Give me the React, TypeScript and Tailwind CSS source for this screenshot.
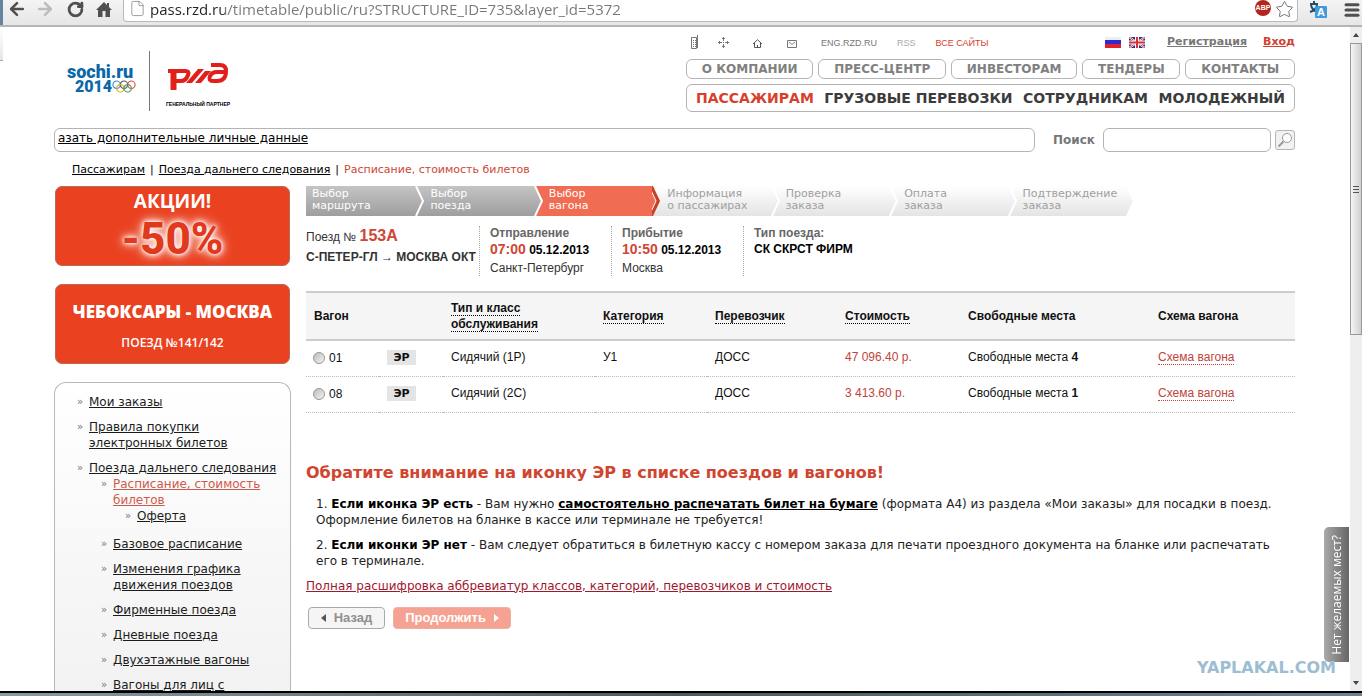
import React from 'react';
import { ArrowLeft, ArrowRight, File, Menu, RotateCw, Star } from 'lucide-react';

interface MenuItem {
  label: string;
  active?: boolean;
  children?: MenuItem[];
}

interface Wagon {
  number: string;
  type: string;
  category: string;
  carrier: string;
  price: string;
  seats: number;
}

const topNav = ['О КОМПАНИИ', 'ПРЕСС-ЦЕНТР', 'ИНВЕСТОРАМ', 'ТЕНДЕРЫ', 'КОНТАКТЫ'];
const mainNav = ['ПАССАЖИРАМ', 'ГРУЗОВЫЕ ПЕРЕВОЗКИ', 'СОТРУДНИКАМ', 'МОЛОДЕЖНЫЙ'];

const steps = [
  ['Выбор', 'маршрута'],
  ['Выбор', 'поезда'],
  ['Выбор', 'вагона'],
  ['Информация', 'о пассажирах'],
  ['Проверка', 'заказа'],
  ['Оплата', 'заказа'],
  ['Подтверждение', 'заказа'],
];
const currentStep = 2;

const menu: MenuItem[] = [
  { label: 'Мои заказы' },
  { label: 'Правила покупки электронных билетов' },
  {
    label: 'Поезда дальнего следования',
    children: [
      { label: 'Расписание, стоимость билетов', active: true, children: [{ label: 'Оферта' }] },
      { label: 'Базовое расписание' },
      { label: 'Изменения графика движения поездов' },
      { label: 'Фирменные поезда' },
      { label: 'Дневные поезда' },
      { label: 'Двухэтажные вагоны' },
      { label: 'Вагоны для лиц с' },
    ],
  },
];

const wagons: Wagon[] = [
  { number: '01', type: 'Сидячий (1Р)', category: 'У1', carrier: 'ДОСС', price: '47 096.40 р.', seats: 4 },
  { number: '08', type: 'Сидячий (2С)', category: '', carrier: 'ДОСС', price: '3 413.60 р.', seats: 1 },
];

function BrowserBar() {
  return (
    <div className="flex h-[27px] shrink-0 items-start border-b-2 border-[#b5b5b5] bg-linear-to-b from-[#f4f4f4] to-[#e6e6e6] text-[#505050]">
      <div className="h-full w-[3px] bg-[#6484a0]" />
      <div className="flex h-[18px] w-[120px] items-center">
        <button aria-label="Назад" className="ml-1"><ArrowLeft size={20} strokeWidth={3} /></button>
        <button aria-label="Вперёд" className="ml-2 text-[#bcbcbc]"><ArrowRight size={20} strokeWidth={3} /></button>
        <button aria-label="Обновить" className="ml-3"><RotateCw size={17} strokeWidth={4} /></button>
        <button aria-label="Домой" className="ml-3">
          <svg width="16" height="17" viewBox="0 0 16 17" fill="currentColor">
            <path d="M8 1 L0 9 H2 V16 H6.500 V10 H9.500 V16 H14 V9 H16 L13 6 V2 H11 V4 Z" />
          </svg>
        </button>
      </div>
      <div className="flex h-[22px] flex-1 items-start rounded-b border border-t-0 border-[#b9b9b9] bg-white pr-[3px] pl-[5px]">
        <File size={17} strokeWidth={1} className="mr-1 text-[#777]" />
        <input
          aria-label="Адрес страницы"
          className="h-[18px] flex-1 bg-[linear-gradient(90deg,#222_75px,#777_75px)] bg-clip-text font-['Open_Sans','Noto_Sans',sans-serif] text-[15px] leading-[18px] text-transparent outline-none"
          defaultValue="pass.rzd.ru/timetable/public/ru?STRUCTURE_ID=735&layer_id=5372"
        />
        <span className="mr-1 flex size-4 items-center justify-center rounded-full bg-[#b3261e] font-['Liberation_Sans',sans-serif] text-[7px] font-bold text-white">ABP</span>
        <button aria-label="В закладки"><Star size={19} strokeWidth={1} /></button>
      </div>
      <div className="flex h-[19px] w-[64px] items-center gap-4 pl-[11px]">
        <svg width="18" height="18" viewBox="0 0 18 18">
          <path d="M1 3 H9 M5 0 V3 M2 4 Q3 9 8 11 M8 4 Q7 9 1 11" stroke="#234d6b" strokeWidth="2" fill="none" />
          <rect x="6" y="5" width="12" height="12" rx="1" fill="#3f9bdb" />
          <text x="8" y="15" fontSize="11" fontWeight="bold" fontFamily="Liberation Sans" fill="#fff">A</text>
        </svg>
        <button aria-label="Меню"><Menu size={18} strokeWidth={4} /></button>
      </div>
    </div>
  );
}

function Logos() {
  return (
    <div className="flex pt-[24px] pl-[13px]">
      <div className="mt-[13px] h-[36px] w-[82px] font-['Roboto','DejaVu_Sans',sans-serif] font-black text-[#0a68a8]">
        <div className="text-[18px] leading-[15px]">sochi.ru</div>
        <div className="flex h-[15px] items-center pl-2">
          <span className="text-[16px] leading-[15px]">2014</span>
          <svg width="24" height="13" viewBox="0 0 26 14" fill="none" strokeWidth="1.200">
            <circle cx="5" cy="5" r="4" stroke="#4a8cc0" />
            <circle cx="13" cy="5" r="4" stroke="#555" />
            <circle cx="21" cy="5" r="4" stroke="#d9534a" />
            <circle cx="9" cy="9" r="4" stroke="#d9b33c" />
            <circle cx="17" cy="9" r="4" stroke="#4c9a5e" />
          </svg>
        </div>
      </div>
      <div className="h-[60px] w-px bg-[#777]" />
      <div className="flex flex-col items-center pt-[12px] pl-4">
        <svg width="61" height="28" viewBox="0 0 61 28" fill="none" stroke="#e21f1a" strokeWidth="4" role="img" aria-label="РЖД">
          <path d="M0 8 H10" />
          <path d="M5.500 6 V27" strokeWidth="6" />
          <path d="M8 8 H17 Q22 8 20 12 Q18 18 13 18 H8" />
          <path d="M18 20 H24 L36 6 H30 Z" fill="#e21f1a" stroke="none" />
          <path d="M27 20 H33 L43 8 H37 Z" fill="#e21f1a" stroke="none" />
          <path d="M43 2 H52 Q58 2 58 8 Q58 18 49 18 H45 Q40 18 42 13 Q44 9 49 9 H56" />
        </svg>
        <span className="mt-[9px] font-['Liberation_Sans',sans-serif] text-[5px] leading-[8px] font-bold text-black">ГЕНЕРАЛЬНЫЙ ПАРТНЕР</span>
      </div>
    </div>
  );
}

function RussianFlag() {
  return (
    <svg width="16" height="11" viewBox="0 0 16 11">
      <rect width="16" height="4" fill="#eee" />
      <rect y="3" width="16" height="4" fill="#2a2ad0" />
      <rect y="7" width="16" height="4" fill="#e0202c" />
    </svg>
  );
}

function BritishFlag() {
  return (
    <svg width="16" height="11" viewBox="0 0 16 11">
      <rect width="16" height="11" fill="#2c2f7c" />
      <path d="M0 0 L16 11 M16 0 L0 11" stroke="#fff" strokeWidth="2" />
      <path d="M0 0 L16 11 M16 0 L0 11" stroke="#d8404a" strokeWidth="1" />
      <path d="M8 0 V11 M0 5.500 H16" stroke="#fff" strokeWidth="4" />
      <path d="M8 0 V11 M0 5.500 H16" stroke="#d8303a" strokeWidth="2" />
    </svg>
  );
}

function ServiceLinks() {
  return (
    <div className="flex h-[18px] items-center font-['Liberation_Sans',sans-serif] text-[9px] text-[#777]">
      <a href="#mobile" aria-label="Мобильная версия" className="ml-[5px]">
        <svg width="9" height="14" viewBox="0 0 9 14" fill="none" stroke="currentColor">
          <path d="M0.500 2.500 H5.500 V13.500 H0.500 Z M6.500 0 V13" />
          <path d="M2 5.500 H5 M2 7.500 H5 M2 9.500 H5 M2 11.500 H5" strokeDasharray="1 1" />
        </svg>
      </a>
      <a href="#map" aria-label="Карта сайта" className="ml-[18px]">
        <svg width="11" height="11" viewBox="0 0 11 11" fill="none" stroke="currentColor">
          <path d="M5.500 0 V11 M0 5.500 H11" strokeDasharray="4 1 1 1" />
          <path d="M4 1.500 H7 M4 9.500 H7 M1.500 4 V7 M9.500 4 V7" />
        </svg>
      </a>
      <a href="#home" aria-label="Главная" className="mt-[3px] ml-6">
        <svg width="9" height="9" viewBox="0 0 9 9" fill="none" stroke="#555">
          <path d="M0 5 L4.500 0.700 L9 5 M1.500 4 V8.500 H7.500 V4 M4.500 6 V8" />
        </svg>
      </a>
      <a href="#mail" aria-label="Почта" className="mt-[3px] ml-[25px]">
        <svg width="10" height="8" viewBox="0 0 10 8" fill="none" stroke="currentColor">
          <path d="M0.500 0.500 H9.500 V7.500 H0.500 Z M2 2 L5 4.500 L8 2" />
        </svg>
      </a>
      <a href="#eng" className="mt-1 ml-6">ENG.RZD.RU</a>
      <a href="#rss" className="mt-1 ml-[20px] text-[#aaa]">RSS</a>
      <a href="#all" className="mt-1 ml-[20px] text-[#d8402c]">ВСЕ САЙТЫ</a>
      <div className="ml-auto flex items-center font-['DejaVu_Sans',sans-serif] text-[11px] font-bold">
        <RussianFlag />
        <span className="w-2" />
        <BritishFlag />
        <a href="#register" className="ml-[22px] underline">Регистрация</a>
        <a href="#login" className="ml-4 text-[#cf4030] underline">Вход</a>
      </div>
    </div>
  );
}

function Header() {
  return (
    <header className="flex justify-between">
      <Logos />
      <div className="w-[609px] pt-[6px]">
        <ServiceLinks />
        <nav className="mt-[8px] flex gap-[5px]">
          {topNav.map((label) => (
            <a key={label} href="#nav" className="flex h-[20px] flex-auto items-center justify-center rounded-[6px] border border-[#b4b4b4] text-[12px] font-bold text-[#808080]">
              {label}
            </a>
          ))}
        </nav>
        <nav className="mt-[5px] flex h-[28px] items-center justify-between rounded-[6px] border border-[#b4b4b4] px-[9px] text-[14px] font-bold text-[#3c3c3c]">
          {mainNav.map((label, idx) => (
            <a key={label} href="#main" className={idx === 0 ? 'text-[#d8402c]' : ''}>{label}</a>
          ))}
        </nav>
      </div>
    </header>
  );
}

function SearchRow() {
  return (
    <div className="mt-[16px] flex items-center">
      <div className="h-[24px] flex-1 rounded-[6px] border border-[#b4b4b4] px-[3px] text-[12px] leading-[18px]">
        <a href="#ticker" className="underline">азать дополнительные личные данные</a>
      </div>
      <label htmlFor="search" className="ml-[18px] text-[12px] font-bold text-[#777]">Поиск</label>
      <input id="search" className="ml-2 h-[24px] w-[168px] rounded-[6px] border border-[#b4b4b4] px-2 text-[12px]" />
      <button aria-label="Найти" className="ml-1 flex size-5 items-center justify-center rounded-[3px] border border-[#b4b4b4] bg-[#f2f2f2]">
        <svg width="16" height="16" viewBox="0 0 16 16" fill="none" stroke="#999">
          <circle cx="10" cy="6" r="4.500" fill="#fff" />
          <path d="M6.500 9.500 L1.500 14.500" strokeWidth="2" />
        </svg>
      </button>
    </div>
  );
}

function MenuList({ items, nested }: { items: MenuItem[]; nested?: boolean }) {
  return (
    <ul className={nested ? 'pl-6' : ''}>
      {items.map((item) => (
        <li key={item.label} className="mb-[9px] last:mb-0">
          <div className="relative">
            <span className="absolute -left-3 text-[10px] text-[#777]">»</span>
            <a href="#menu" className={`underline ${item.active ? 'text-[#cf5a4c]' : 'text-[#1c1c1c]'}`}>{item.label}</a>
          </div>
          {item.children && (
            <div className={nested ? 'pb-[3px]' : ''}>
              <MenuList items={item.children} nested />
            </div>
          )}
        </li>
      ))}
    </ul>
  );
}

function Sidebar() {
  return (
    <aside className="flex w-[237px] shrink-0 flex-col">
      <a href="#sale" className="mx-px block h-[80px] rounded-[7px] border border-[#b86a5a] bg-[#ea4120] text-center font-['Open_Sans','Noto_Sans',sans-serif] font-bold text-white">
        <span className="block text-[19px] leading-[28px]">АКЦИИ!</span>
        <span className="block font-['Roboto',sans-serif] text-[44px] leading-[48px] font-extrabold text-[#e0391c] [text-shadow:0_0_2px_#fff,0_0_5px_#fff,0_0_8px_#fff,0_0_14px_#ffd0c4]">-50%</span>
      </a>
      <a href="#train" className="mx-px mt-[18px] block h-[80px] rounded-[7px] border border-[#b86a5a] bg-[#ea4120] pt-[14px] text-center font-['Open_Sans','Noto_Sans',sans-serif] text-white">
        <span className="block text-[17px] leading-[26px] font-extrabold">ЧЕБОКСАРЫ - МОСКВА</span>
        <span className="mt-2 block text-[12px] leading-[20px] font-semibold">ПОЕЗД №141/142</span>
      </a>
      <nav className="mt-[18px] flex-1 rounded-t-[12px] border border-b-0 border-[#b8b8b8] bg-linear-to-b from-white to-[#f2f2f2] pt-[11px] pr-[8px] pl-[34px] text-[12px] leading-[16px]">
        <MenuList items={menu} />
      </nav>
    </aside>
  );
}

function StepTip({ idx }: { idx: number }) {
  const afterTip = 'M1 0 H9 V30 H1 L8 15 Z';
  return (
    <svg className="absolute top-0 right-0" width="9" height="30" viewBox="0 0 9 30" fill="none">
      <defs>
        <linearGradient id="pale" x1="0" y1="0" x2="0" y2="1">
          <stop offset="0" stopColor="#fff" />
          <stop offset="1" stopColor="#e4e4e4" />
        </linearGradient>
      </defs>
      {idx === currentStep - 1 && <path d={afterTip} fill="#f06c52" />}
      {idx === currentStep && <path d="M0 0 H9 V30 H0 Z" fill="url(#pale)" />}
      {idx === currentStep && <path d="M0 0 H1 L8 15 L1 30 H0 Z" fill="#c9402a" />}
      {idx === currentStep && <path d="M-3 0 L4 15 L-3 30" fill="#f06c52" stroke="#fff" />}
      {idx === steps.length - 1 && <path d={afterTip} fill="#fff" />}
      {idx !== currentStep && <path d="M1 0 L8 15 L1 30" stroke="#fff" strokeWidth="2" />}
    </svg>
  );
}

function Steps() {
  return (
    <ol className="grid w-[829px] grid-cols-7 text-[11px] leading-[12px]">
      {steps.map(([first, second], idx) => {
        let look = 'bg-linear-to-b from-white to-[#e4e4e4] text-[#a0a0a0]';
        if (idx < currentStep) look = 'bg-linear-to-b from-[#c4c4c4] to-[#9e9e9e] text-white';
        if (idx === currentStep) look = 'bg-[#f06c52] text-white';
        return (
          <li key={idx} className={`relative h-[30px] pt-[2px] pl-[6px] whitespace-nowrap ${look}`}>
            {first}<br />{second}
            <StepTip idx={idx} />
          </li>
        );
      })}
    </ol>
  );
}

function TrainInfo() {
  return (
    <div className="mt-[10px] flex h-[50px] font-['Liberation_Sans',sans-serif] text-[12px] leading-[18px] text-[#333]">
      <div className="w-[173px] leading-[20px] whitespace-nowrap">
        <div>Поезд № <b className="text-[16px] text-[#cf4634]">153А</b></div>
        <div className="font-bold">С-ПЕТЕР-ГЛ → МОСКВА ОКТ</div>
      </div>
      <div className="w-[132px] border-l border-dotted border-[#aaa] pl-[10px] whitespace-nowrap">
        <div className="leading-[14px] font-bold text-[#666]">Отправление</div>
        <div className="font-bold text-black"><span className="text-[14px] text-[#cf4634]">07:00</span> 05.12.2013</div>
        <div>Санкт-Петербург</div>
      </div>
      <div className="w-[132px] border-l border-dotted border-[#aaa] pl-[10px] whitespace-nowrap">
        <div className="leading-[14px] font-bold text-[#666]">Прибытие</div>
        <div className="font-bold text-black"><span className="text-[14px] text-[#cf4634]">10:50</span> 05.12.2013</div>
        <div>Москва</div>
      </div>
      <div className="border-l border-dotted border-[#aaa] pl-[10px]">
        <div className="leading-[14px] font-bold text-[#666]">Тип поезда:</div>
        <div className="font-bold text-black">СК СКРСТ ФИРМ</div>
      </div>
    </div>
  );
}

function WagonTable() {
  const hint = 'border-b border-dotted border-black';
  const head = 'px-2 pb-px';
  const cell = 'px-2 pb-[3px]';
  return (
    <table className="mt-[15px] w-full table-fixed border-collapse text-left font-['Liberation_Sans',sans-serif] text-[12px] leading-[16px] text-[#111]">
      <colgroup>
        <col className="w-[73px]" />
        <col className="w-[64px]" />
        <col className="w-[152px]" />
        <col className="w-[112px]" />
        <col className="w-[130px]" />
        <col className="w-[123px]" />
        <col className="w-[190px]" />
        <col />
      </colgroup>
      <thead>
        <tr className="h-[48px] border-y-2 border-[#ccc] bg-[#f5f5f5]">
          <th className={head}>Вагон</th>
          <th />
          <th className={head}><span className={hint}>Тип и класс</span><br /><span className={hint}>обслуживания</span></th>
          <th className={head}><span className={hint}>Категория</span></th>
          <th className={head}><span className={hint}>Перевозчик</span></th>
          <th className={head}><span className={hint}>Стоимость</span></th>
          <th className={head}>Свободные места</th>
          <th className={head}>Схема вагона</th>
        </tr>
      </thead>
      <tbody>
        {wagons.map((wagon) => (
          <tr key={wagon.number} className="h-[36px] border-b border-dotted border-[#bbb]">
            <td className="px-[7px]">
              <label className="flex items-center gap-1">
                <input type="radio" name="wagon" className="size-3 appearance-none rounded-full border border-[#999] bg-linear-to-br from-[#bbb] to-[#f4f4f4]" />
                {wagon.number}
              </label>
            </td>
            <td className={head}>
              <span className="block w-[29px] bg-[#e4e4e4] text-center font-['DejaVu_Sans',sans-serif] text-[11px] leading-[15px] font-bold">ЭР</span>
            </td>
            <td className={cell}>{wagon.type}</td>
            <td className={cell}>{wagon.category}</td>
            <td className={cell}>{wagon.carrier}</td>
            <td className={`${cell} text-[#c0453a]`}>{wagon.price}</td>
            <td className={cell}>Свободные места <b>{wagon.seats}</b></td>
            <td className={cell}>
              <a href="#scheme" className="border-b border-dotted border-[#c0453a] text-[#c0453a]">Схема вагона</a>
            </td>
          </tr>
        ))}
      </tbody>
    </table>
  );
}

function Notice() {
  return (
    <section className="mt-[49px] text-[12px] leading-[16px] text-[#222]">
      <h2 className="text-[16px] leading-[22px] font-bold text-[#d0452f]">Обратите внимание на иконку ЭР в списке поездов и вагонов!</h2>
      <div className="mt-3 pl-[10px]">
        <p>
          1. <b className="text-black">Если иконка ЭР есть</b> - Вам нужно <b className="text-black underline">самостоятельно распечатать билет на бумаге</b> (формата А4) из раздела «Мои заказы» для посадки в поезд.
          <br />Оформление билетов на бланке в кассе или терминале не требуется!
        </p>
        <p className="mt-[9px]">
          2. <b className="text-black">Если иконки ЭР нет</b> - Вам следует обратиться в билетную кассу с номером заказа для печати проездного документа на бланке или распечатать
          <br />его в терминале.
        </p>
      </div>
      <a href="#legend" className="mt-[9px] inline-block text-[#a01830] underline">Полная расшифровка аббревиатур классов, категорий, перевозчиков и стоимость</a>
      <div className="mt-[13px] flex gap-2 pl-[2px] font-['Liberation_Sans',sans-serif] text-[13px] font-bold">
        <button className="flex h-[22px] w-[77px] items-center justify-center gap-2 rounded-[4px] border border-[#aaa] bg-[#f5f5f5] text-[#909090]">
          <svg width="5" height="8" viewBox="0 0 5 8"><path d="M5 0 V8 L0 4 Z" fill="#555" /></svg>
          Назад
        </button>
        <button className="flex h-[22px] w-[118px] items-center justify-center gap-2 rounded-[4px] border border-[#efb0a4] bg-[#f5a292] text-white">
          Продолжить
          <svg width="5" height="8" viewBox="0 0 5 8"><path d="M0 0 V8 L5 4 Z" fill="#fff" /></svg>
        </button>
      </div>
    </section>
  );
}

function Scrollbar() {
  return (
    <div className="flex w-[12px] shrink-0 flex-col items-center bg-[#eee]">
      <svg className="my-[6px]" width="6" height="4" viewBox="0 0 6 4"><path d="M0 4 L3 0 L6 4 Z" fill="#444" /></svg>
      <div className="flex h-[44%] w-full flex-col items-center justify-center gap-[2px] border border-[#999] bg-linear-to-r from-[#f5f5f5] to-[#d0d0d0]">
        <div className="h-px w-[6px] bg-[#555]" />
        <div className="h-px w-[6px] bg-[#555]" />
        <div className="h-px w-[6px] bg-[#555]" />
      </div>
      <svg className="mt-auto mb-[6px]" width="6" height="4" viewBox="0 0 6 4"><path d="M0 0 L3 4 L6 0 Z" fill="#444" /></svg>
    </div>
  );
}

export default function App() {
  return (
    <div className="flex h-screen flex-col overflow-hidden bg-white font-['DejaVu_Sans',sans-serif] text-black">
      <BrowserBar />
      <div className="relative flex min-h-0 flex-1">
        <div className="absolute top-0 left-0 h-[34px] w-[3px] border-b border-[#aaa] bg-linear-to-b from-white to-[#e4e6ea]" />
        <div className="flex min-w-0 flex-1 flex-col overflow-hidden pr-[55px] pl-[54px]">
          <Header />
          <SearchRow />
          <nav className="mt-[10px] pl-[18px] text-[11px] leading-[16px]">
            <a href="#passengers" className="underline">Пассажирам</a>
            <span className="mx-[5px]">|</span>
            <a href="#trains" className="underline">Поезда дальнего следования</a>
            <span className="mx-[5px]">|</span>
            <span className="text-[#cf4634]">Расписание, стоимость билетов</span>
          </nav>
          <div className="mt-[8px] flex flex-1 gap-[15px]">
            <Sidebar />
            <main className="min-w-0 flex-1">
              <Steps />
              <TrainInfo />
              <WagonTable />
              <Notice />
            </main>
          </div>
        </div>
        <button className="absolute right-[13px] bottom-[29px] flex h-[135px] w-[25px] items-center justify-center rounded-l-[5px] bg-linear-to-r from-[#aaa] to-[#666] font-['Open_Sans','Noto_Sans',sans-serif] text-[12px] text-white">
          <span className="rotate-180 whitespace-nowrap [writing-mode:vertical-rl]">Нет желаемых мест?</span>
        </button>
        <div className="absolute right-[26px] bottom-[12px] text-[16px] leading-[22px] font-bold text-[#9dbdd3]">YAPLAKAL.COM</div>
        <Scrollbar />
      </div>
      <div className="h-[7px] shrink-0 border-t-2 border-b-2 border-t-black border-b-white bg-linear-to-r from-[#8a9aa4] via-[#4c5a62] to-[#6e8390]" />
    </div>
  );
}
